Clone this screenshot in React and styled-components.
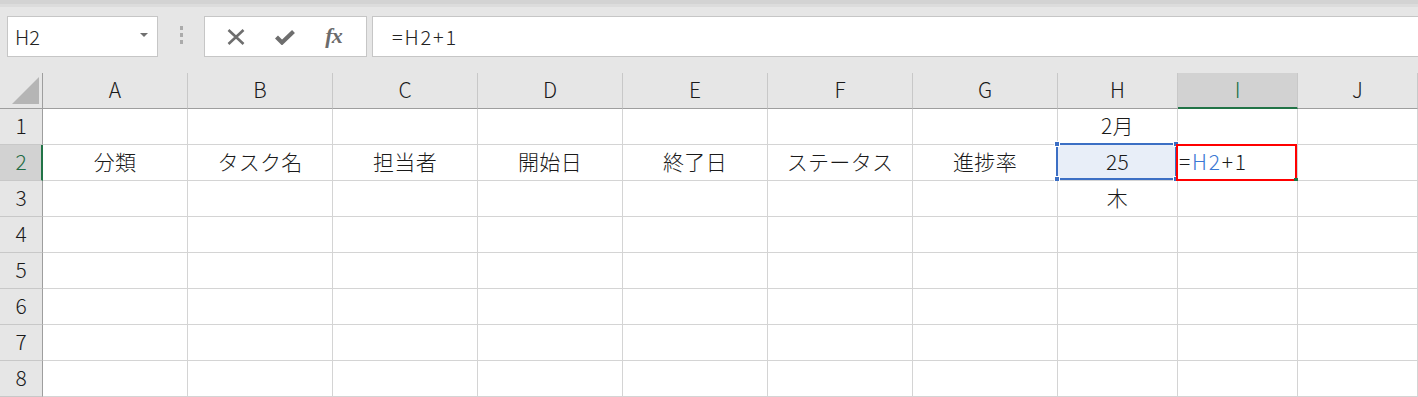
import React from "react";
import styled, { createGlobalStyle, css } from "styled-components";

const Global = createGlobalStyle`
  html, body { margin: 0; padding: 0; background: #e6e6e6; overflow: hidden; }
  * { box-sizing: border-box; }
`;

const CELL_FONT = `"Noto Sans CJK JP", "Noto Sans", sans-serif`;

const Page = styled.div`
  width: 1418px;
  height: 397px;
  display: flex;
  flex-direction: column;
  background: #e6e6e6;
  font-family: ${CELL_FONT};
  font-weight: 300;
  overflow: hidden;
`;

const TopStrip = styled.div`
  height: 7px;
  flex: none;
  background: linear-gradient(#d3d3d3 0 4px, #dcdcdc 4px 7px);
`;

const Toolbar = styled.div`
  height: 66px;
  flex: none;
  display: flex;
  align-items: flex-start;
  padding: 9px 0 0 7px;
`;

const Box = styled.div`
  height: 41px;
  background: #ffffff;
  border: 1px solid #c6c6c6;
  display: flex;
  align-items: center;
`;

const NameBox = styled(Box)`
  width: 151px;
  padding: 0 8px 0 7px;
  justify-content: space-between;
  font-size: 20px;
  color: #222;
`;

const Caret = styled.span`
  width: 0;
  height: 0;
  border-left: 4px solid transparent;
  border-right: 4px solid transparent;
  border-top: 4px solid #707070;
  margin-right: 1px;
  margin-bottom: 4px;
`;

const Grip = styled.div`
  width: 46px;
  height: 41px;
  display: flex;
  flex-direction: column;
  align-items: center;
  justify-content: center;
  gap: 3px;
  padding-bottom: 4px;
`;

const Dot = styled.span`
  width: 3px;
  height: 4px;
  background: #ababab;
`;

const FuncBox = styled(Box)`
  width: 163px;
  justify-content: space-around;
  padding: 0 8px 0 6px;
`;

const IconSlot = styled.span`
  width: 34px;
  height: 30px;
  display: flex;
  align-items: center;
  justify-content: center;
`;

const Fx = styled.span`
  font-family: "Liberation Serif", "DejaVu Serif", serif;
  font-style: italic;
  font-weight: bold;
  font-size: 22px;
  color: #6b6b6b;
  letter-spacing: -1px;
  margin-bottom: 2px;
`;

const FormulaBox = styled(Box)`
  flex: 1;
  margin-left: 5px;
  border-right: none;
  padding-left: 19px;
  font-size: 20px;
  color: #222;
  letter-spacing: 1.8px;
`;

const Sheet = styled.div`
  display: grid;
  grid-template-columns: 43px repeat(7, 145px) 120px 120px 1fr;
  grid-auto-rows: 36px;
  background: #fff;
  font-size: 21px;
  color: #1a1a1a;
`;

const Corner = styled.div`
  background: #e6e6e6;
  border-right: 1px solid #9e9e9e;
  border-bottom: 1px solid #9e9e9e;
  display: flex;
  align-items: flex-end;
  justify-content: flex-end;
  padding: 0 3px 4px 0;
`;

const ColHead = styled.div`
  background: ${(p) => (p.$active ? "#d2d2d2" : "#e6e6e6")};
  border-right: 1px solid #c8c8c8;
  border-bottom: ${(p) => (p.$active ? "2px solid #217346" : "1px solid #9e9e9e")};
  color: ${(p) => (p.$active ? "#217346" : "#1a1a1a")};
  display: flex;
  align-items: center;
  justify-content: center;
  font-size: 21px;
  padding-bottom: ${(p) => (p.$active ? "2px" : "3px")};
`;

const RowHead = styled.div`
  background: ${(p) => (p.$active ? "#d2d2d2" : "#e6e6e6")};
  border-bottom: 1px solid #c8c8c8;
  border-right: ${(p) => (p.$active ? "2px solid #217346" : "1px solid #9e9e9e")};
  color: ${(p) => (p.$active ? "#1f6b45" : "#1a1a1a")};
  display: flex;
  align-items: center;
  justify-content: center;
  font-size: 21px;
  padding-bottom: 3px;
  ${(p) => p.$active && css`padding-left: 1px;`}
`;

const Cell = styled.div`
  position: relative;
  border-right: 1px solid #d4d4d4;
  border-bottom: 1px solid #d4d4d4;
  display: flex;
  align-items: center;
  justify-content: ${(p) => (p.$left ? "flex-start" : "center")};
  padding: ${(p) => (p.$left ? "0 0 3px 1px" : "0 0 4px 0")};
  background: ${(p) => (p.$selected ? "#e8eef8" : "#fff")};
  white-space: nowrap;
  letter-spacing: ${(p) => (p.$left ? "1.8px" : "0.3px")};
`;

const Selection = styled.div`
  position: absolute;
  top: -2px;
  left: -2px;
  right: 0;
  bottom: 0;
  border: 2px solid #3c6fc4;
  pointer-events: none;
`;

const Handle = styled.span`
  position: absolute;
  width: 6px;
  height: 6px;
  background: #3c6fc4;
  border: 1px solid #fff;
  ${(p) => (p.$top ? "top: -4px;" : "bottom: -4px;")}
  ${(p) => (p.$leftSide ? "left: -4px;" : "right: -4px;")}
`;

const EditBox = styled.div`
  position: absolute;
  top: -1px;
  left: -2px;
  right: 0;
  bottom: -1px;
  border: 2px solid #ff0000;
  pointer-events: none;
`;

const FillMark = styled.span`
  position: absolute;
  right: -3px;
  bottom: -3px;
  width: 4px;
  height: 4px;
  background: #217346;
`;

const Ref = styled.span`
  color: #3a78d4;
`;

const CloseIcon = () => (
  <svg width="20" height="16" viewBox="0 0 20 16">
    <path d="M2.5 1 L17.5 15 M17.5 1 L2.5 15" stroke="#6e6e6e" strokeWidth="2.6" fill="none" />
  </svg>
);

const CheckIcon = () => (
  <svg width="22" height="16" viewBox="0 0 22 16">
    <path d="M2.5 8 L8 13.5 L19.5 2.5" stroke="#6e6e6e" strokeWidth="4.2" fill="none" strokeLinejoin="miter" />
  </svg>
);

const CornerTriangle = () => (
  <svg width="27" height="27" viewBox="0 0 27 27">
    <polygon points="27,0 27,27 0,27" fill="#b5b5b5" />
  </svg>
);

const columns = ["A", "B", "C", "D", "E", "F", "G", "H", "I", "J"];

const data = {
  1: { H: "2月" },
  2: {
    A: "分類",
    B: "タスク名",
    C: "担当者",
    D: "開始日",
    E: "終了日",
    F: "ステータス",
    G: "進捗率",
    H: "25",
  },
  3: { H: "木" },
};

export default function App() {
  const rows = [1, 2, 3, 4, 5, 6, 7, 8];
  return (
    <>
      <Global />
      <Page>
        <TopStrip />
        <Toolbar>
          <NameBox>
            <span>H2</span>
            <Caret />
          </NameBox>
          <Grip>
            <Dot />
            <Dot />
            <Dot />
          </Grip>
          <FuncBox>
            <IconSlot>
              <CloseIcon />
            </IconSlot>
            <IconSlot>
              <CheckIcon />
            </IconSlot>
            <IconSlot>
              <Fx>fx</Fx>
            </IconSlot>
          </FuncBox>
          <FormulaBox>=H2+1</FormulaBox>
        </Toolbar>
        <Sheet>
          <Corner>
            <CornerTriangle />
          </Corner>
          {columns.map((c) => (
            <ColHead key={c} $active={c === "I"}>
              {c}
            </ColHead>
          ))}
          {rows.map((r) => (
            <React.Fragment key={r}>
              <RowHead $active={r === 2}>{r}</RowHead>
              {columns.map((c) => {
                const isSel = r === 2 && c === "H";
                const isEdit = r === 2 && c === "I";
                return (
                  <Cell key={c} $selected={isSel} $left={isEdit}>
                    {isEdit ? (
                      <>
                        =<Ref>H2</Ref>+1
                        <EditBox>
                          <FillMark />
                        </EditBox>
                      </>
                    ) : (
                      data[r]?.[c] ?? ""
                    )}
                    {isSel && (
                      <Selection>
                        <Handle $top $leftSide />
                        <Handle $top />
                        <Handle $leftSide />
                        <Handle />
                      </Selection>
                    )}
                  </Cell>
                );
              })}
            </React.Fragment>
          ))}
        </Sheet>
      </Page>
    </>
  );
}
